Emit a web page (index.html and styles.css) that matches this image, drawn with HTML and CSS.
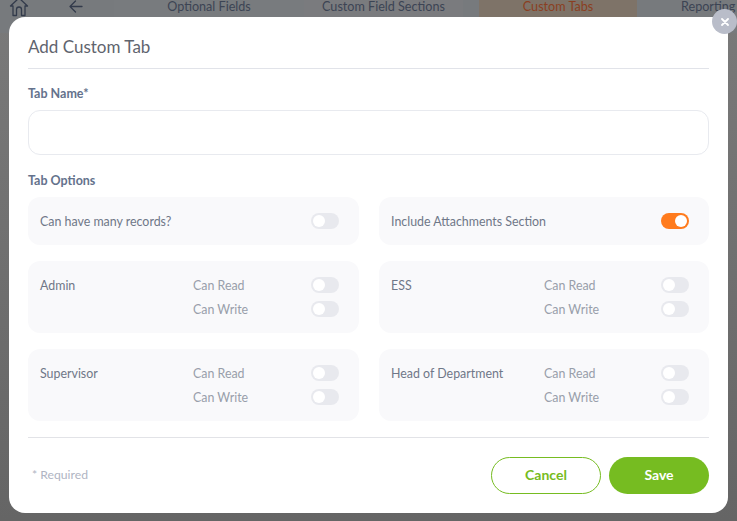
FILE: index.html
```html
<!DOCTYPE html>
<html lang="en">
<head>
<meta charset="utf-8">
<title>Add Custom Tab</title>
<link rel="stylesheet" href="styles.css">
</head>
<body>
<div class="backdrop">
  <nav class="topbar">
    <span class="nav-icon home">
      <svg width="20" height="21" viewBox="0 0 20 21" fill="none" stroke="#333b4b" stroke-width="1.300" stroke-linejoin="round" stroke-linecap="round"><path d="M1.500 10 10 2l8.500 8h-2.500v9.500h-3.500v-6a2.500 2.500 0 0 0-5 0v6H4V10z"/></svg>
    </span>
    <span class="nav-icon back">
      <svg width="14" height="13" viewBox="0 0 14 13" fill="none" stroke="#333b4b" stroke-width="1.300" stroke-linecap="round" stroke-linejoin="round"><path d="M13 6.500H1M6.500 1 1 6.500 6.500 12"/></svg>
    </span>
    <span class="tab tab-optional">Optional Fields</span>
    <span class="tab tab-sections">Custom Field Sections</span>
    <span class="tab tab-active">Custom Tabs</span>
    <span class="tab tab-reporting">Reporting</span>
  </nav>
</div>

<main class="modal">
  <button class="close" aria-label="Close">
    <svg width="8" height="8" viewBox="0 0 8 8" stroke="#fff" stroke-width="1.800" stroke-linecap="round"><path d="M1 1l6 6M7 1 1 7"/></svg>
  </button>
  <h1 class="title">Add Custom Tab</h1>
  <label class="label name-label">Tab Name*</label>
  <div class="input"></div>
  <div class="label options-label">Tab Options</div>

  <div class="grid">
    <section class="card single">
      <span class="card-name">Can have many records?</span>
      <span class="switch"></span>
    </section>
    <section class="card single">
      <span class="card-name">Include Attachments Section</span>
      <span class="switch on"></span>
    </section>

    <section class="card">
      <span class="card-name">Admin</span>
      <div class="perms">
        <div class="perm"><span>Can Read</span><span class="switch"></span></div>
        <div class="perm"><span>Can Write</span><span class="switch"></span></div>
      </div>
    </section>
    <section class="card">
      <span class="card-name">ESS</span>
      <div class="perms">
        <div class="perm"><span>Can Read</span><span class="switch"></span></div>
        <div class="perm"><span>Can Write</span><span class="switch"></span></div>
      </div>
    </section>

    <section class="card">
      <span class="card-name">Supervisor</span>
      <div class="perms">
        <div class="perm"><span>Can Read</span><span class="switch"></span></div>
        <div class="perm"><span>Can Write</span><span class="switch"></span></div>
      </div>
    </section>
    <section class="card">
      <span class="card-name">Head of Department</span>
      <div class="perms">
        <div class="perm"><span>Can Read</span><span class="switch"></span></div>
        <div class="perm"><span>Can Write</span><span class="switch"></span></div>
      </div>
    </section>
  </div>

  <footer class="footer">
    <span class="required">* Required</span>
    <div class="actions">
      <button class="btn cancel">Cancel</button>
      <button class="btn save">Save</button>
    </div>
  </footer>
</main>
</body>
</html>
```
FILE: styles.css
```css
* { box-sizing: border-box; }
html, body { margin: 0; height: 100%; }
body {
  width: 737px;
  height: 521px;
  overflow: hidden;
  position: relative;
  font-family: "Lato", "Noto Sans", sans-serif;
  background: #6b6b6b;
}
.backdrop {
  position: absolute;
  inset: 0;
  overflow: hidden;
  background: linear-gradient(#7a7a7a, #656565);
}
.topbar {
  display: flex;
  align-items: flex-start;
  height: 33px;
  font-size: 12.6px;
  color: #3c4454;
  background: #777a7d;
}
.nav-icon { display: flex; justify-content: center; flex: none; }
.home { width: 38px; margin-top: -4px; }
.back { width: 76px; }
.tab { display: block; text-align: center; line-height: 14px; flex: none; height: 17px; }
.tab-optional { width: 190px; background: #787b7e; }
.tab-sections { width: 159px; margin-right: 16px; background: #7a7b7e; }
.tab-active { width: 158px; background: #7e7368; color: #8a3f22; }
.tab-reporting { width: 100px; padding-left: 44px; text-align: left; white-space: nowrap; overflow: hidden; }

.modal {
  position: absolute;
  left: 9px;
  top: 17px;
  width: 719px;
  height: 496px;
  padding: 0 19px;
  background: #fff;
  border-radius: 16px;
  display: flex;
  flex-direction: column;
}
.close {
  position: absolute;
  right: -9px;
  top: -8px;
  width: 25px;
  height: 25px;
  border: 0;
  padding: 0;
  border-radius: 50%;
  background: #b9bdc9;
  display: flex;
  align-items: center;
  justify-content: center;
}
.title {
  margin: 0;
  height: 52px;
  padding-top: 20px;
  font-size: 17px;
  line-height: 20px;
  font-weight: 400;
  color: #5f646e;
  border-bottom: 1px solid #e1e3e9;
}
.label {
  display: block;
  font-size: 12.500px;
  line-height: 16px;
  font-weight: 700;
  color: #64728c;
}
.name-label { margin-top: 17px; }
.input {
  margin-top: 8px;
  height: 45px;
  border: 1px solid #e8eaef;
  border-radius: 12px;
}
.options-label { margin-top: 18px; }
.grid {
  margin-top: 8px;
  display: grid;
  grid-template-columns: 331px 330px;
  column-gap: 20px;
  row-gap: 16px;
}
.card {
  display: grid;
  grid-template-columns: 153px 1fr;
  padding: 16px 20px 12px 12px;
  height: 72px;
  background: #f9f9fb;
  border-radius: 12px;
  font-size: 12.400px;
  line-height: 18px;
  color: #6f7788;
}
.card.single {
  display: flex;
  justify-content: space-between;
  align-items: flex-start;
  height: 48px;
}
.perms { display: flex; flex-direction: column; gap: 8px; color: #989eaa; }
.perm { display: flex; justify-content: space-between; align-items: flex-start; height: 16px; }
.switch {
  position: relative;
  display: block;
  flex: none;
  width: 28px;
  height: 16px;
  border-radius: 8px;
  background: #e8e9ee;
}
.switch::after {
  content: "";
  position: absolute;
  left: 2px;
  top: 2px;
  width: 12px;
  height: 12px;
  border-radius: 50%;
  background: #fff;
}
.switch.on { background: #ff7b1d; }
.switch.on::after { left: 14px; }
.footer {
  margin-top: 16px;
  border-top: 1px solid #e2e3e7;
  padding-top: 19px;
  display: flex;
  justify-content: space-between;
  align-items: center;
}
.required { margin-left: 4px; margin-bottom: 2px; font-size: 12.200px; color: #b0b5c3; }
.actions { display: flex; gap: 8px; }
.btn {
  height: 37px;
  border-radius: 19px;
  font-family: inherit;
  font-size: 14px;
  font-weight: 700;
  padding: 0 0 2px;
}
.cancel { width: 110px; background: #fff; border: 1px solid #76bc21; color: #76bc21; }
.save { width: 100px; background: #76bc21; border: 0; color: #fff; }
```
